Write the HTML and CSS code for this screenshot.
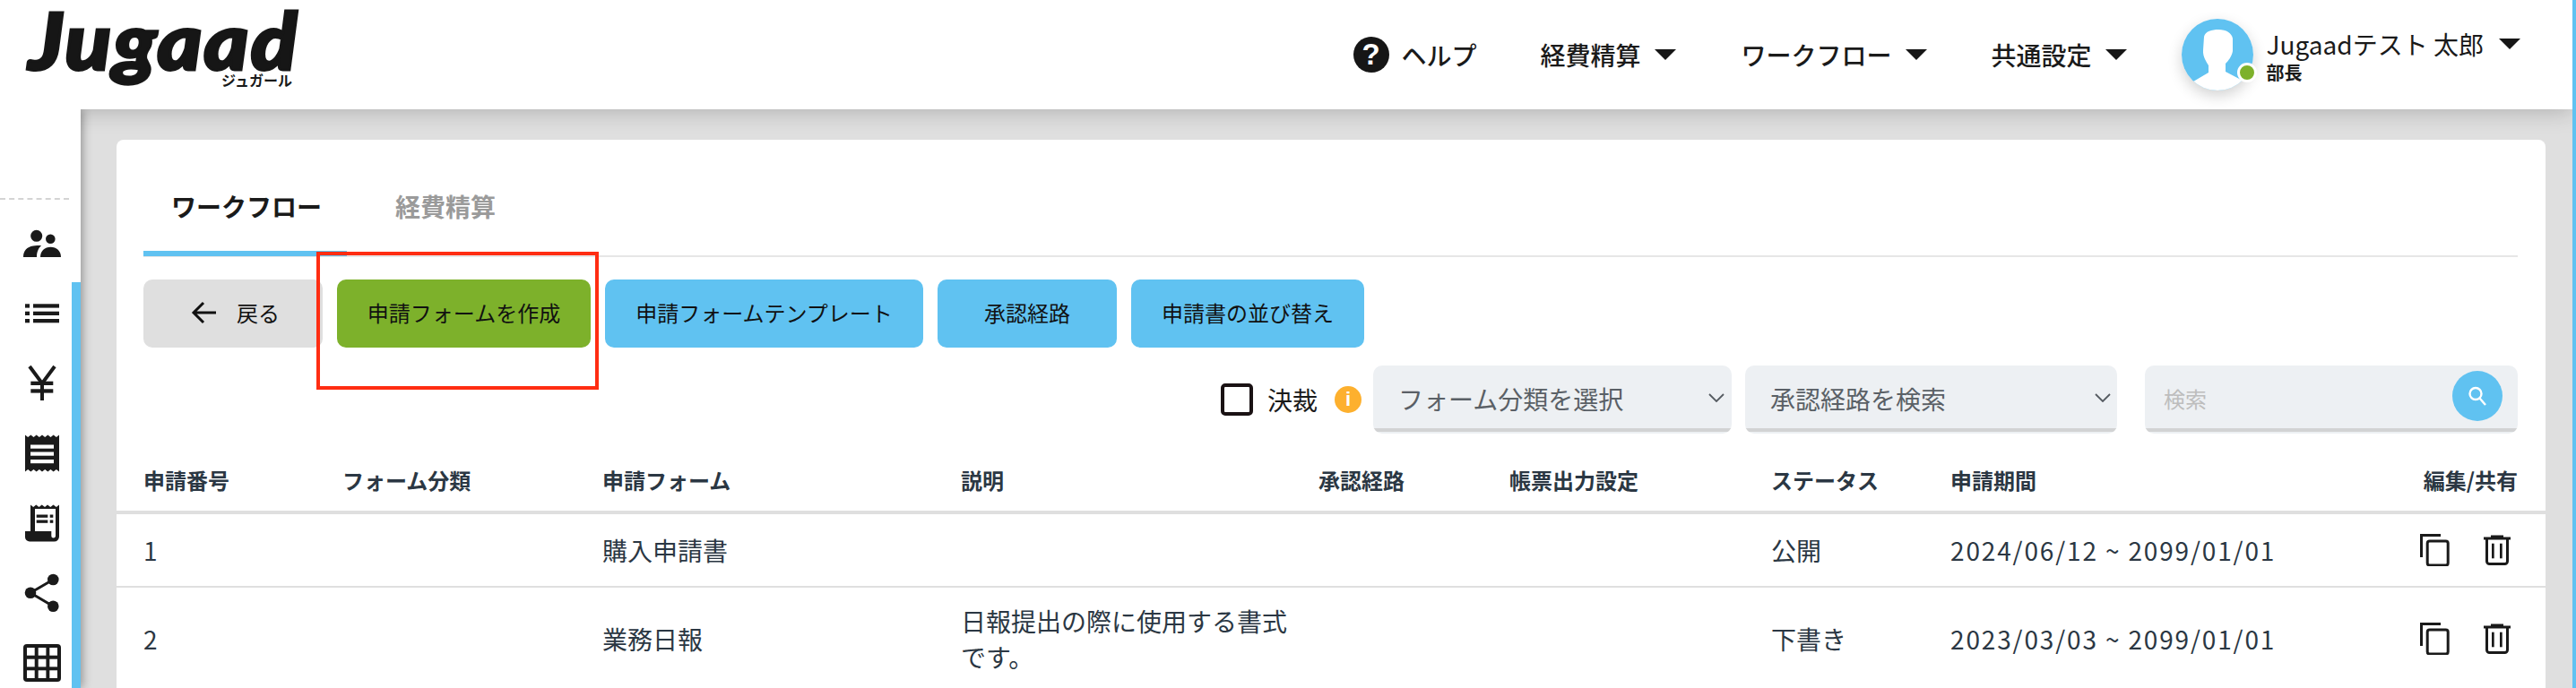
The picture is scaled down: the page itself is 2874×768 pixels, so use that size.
FILE: index.html
```html
<!DOCTYPE html>
<html lang="ja">
<head>
<meta charset="utf-8">
<title>Jugaad ワークフロー</title>
<link rel="stylesheet" href="styles.css">
</head>
<body>
<div class="app">
  <header class="header">
    <div class="logo">
      <span class="logo-word">Jugaad</span>
      <span class="logo-kana">ジュガール</span>
    </div>
    <nav class="nav">
      <a class="nav-help"><span class="help-icon">?</span><span>ヘルプ</span></a>
      <a class="nav-item"><span>経費精算</span><i class="caret"></i></a>
      <a class="nav-item nav-wf"><span>ワークフロー</span><i class="caret"></i></a>
      <a class="nav-item nav-common"><span>共通設定</span><i class="caret"></i></a>
    </nav>
    <div class="user">
      <div class="avatar">
        <svg viewBox="0 0 80 80" width="80" height="80">
          <defs><clipPath id="av"><circle cx="40" cy="40" r="40"/></clipPath></defs>
          <g clip-path="url(#av)">
            <rect width="80" height="80" fill="#60c2f1"/>
            <path fill="#fff" d="M13 70 L30 60 V52 C27 47 23.500 42 24 35 L25 20 C26 14 34 12 41 12 C50 12 56 16 57 22 L57 36 C56 42 52 47 49 50 V59 L70 70 V82 H10Z"/>
          </g>
        </svg>
        <span class="status-dot"></span>
      </div>
      <div class="user-text">
        <div class="user-name">Jugaadテスト 太郎</div>
        <div class="user-role">部長</div>
      </div>
      <i class="caret caret-user"></i>
    </div>
  </header>

  <div class="body-row">
    <aside class="sidebar">
      <div class="side-dash"></div>
      <div class="side-icons">
        <div class="side-item"><svg viewBox="0 0 44 44" class="side-svg"><circle cx="15.700" cy="13.300" r="6.500"/><circle cx="31.300" cy="16.700" r="5.300"/><path d="M1 37C1 30 5 25.500 12 24.500C15 24 18 24 21 24C18 27 16 31 16 37Z"/><path d="M20 37C20 30 25 25.700 31.500 25.700C38 25.700 43 30 43 37Z"/></svg></div>
        <div class="side-item"><svg viewBox="0 0 44 44" class="side-svg"><rect x="3" y="11.300" width="5" height="4.300"/><rect x="3" y="19.700" width="5" height="4.300"/><rect x="3" y="28" width="5" height="4.300"/><rect x="12" y="11.300" width="29" height="4.300"/><rect x="12" y="19.700" width="29" height="4.300"/><rect x="12" y="28" width="29" height="4.300"/></svg></div>
        <div class="side-item"><svg viewBox="0 0 44 44" class="side-svg"><path d="M8 3 L22 22 L36 3 M22 22 V41" fill="none" stroke="#1a1a1a" stroke-width="4"/><rect x="9.300" y="19.700" width="25" height="4.300"/><rect x="9.300" y="28.300" width="25" height="4.300"/></svg></div>
        <div class="side-item"><svg viewBox="0 0 44 44" class="side-svg"><path d="M3 1.500L6.170 4L9.330 1.500L12.500 4L15.670 1.500L18.830 4L22 1.500L25.170 4L28.330 1.500L31.500 4L34.670 1.500L37.830 4L41 1.500V42.500L37.830 40L34.670 42.500L31.500 40L28.330 42.500L25.170 40L22 42.500L18.830 40L15.670 42.500L12.500 40L9.330 42.500L6.170 40L3 42.500Z"/><rect x="9" y="12.500" width="26" height="4.200" fill="#fff"/><rect x="9" y="20.500" width="26" height="4.200" fill="#fff"/><rect x="9" y="29" width="26" height="4.200" fill="#fff"/></svg></div>
        <div class="side-item"><svg viewBox="0 0 44 44" class="side-svg"><path d="M9 1.500L12.200 4L15.300 1.500L18.500 4L21.700 1.500L25 4L28 1.500L31.300 4L34.500 1.500L37.800 4L41 1.500V37A5.500 5.500 0 0 1 35.500 42.500H8A5 5 0 0 1 3 37.500V31H9Z"/><path fill="#fff" d="M14 6H37V36.500A2.500 2.500 0 0 1 34.800 38.500A2.500 2.500 0 0 1 32.300 36V31H14Z"/><rect x="15.700" y="12.500" width="12.600" height="3.300"/><rect x="30.700" y="12.500" width="3.600" height="3.300"/><rect x="15.700" y="18.500" width="12.600" height="3.300"/><rect x="30.700" y="18.500" width="3.600" height="3.300"/></svg></div>
        <div class="side-item"><svg viewBox="0 0 44 44" class="side-svg"><path d="M34.300 7L9 21.700L34.300 36.700" fill="none" stroke="#1a1a1a" stroke-width="3"/><circle cx="34.300" cy="7" r="6.300"/><circle cx="9" cy="21.700" r="6.300"/><circle cx="34.300" cy="36.700" r="6.300"/></svg></div>
        <div class="side-item"><svg viewBox="0 0 44 44" class="side-svg"><rect x="1" y="1" width="42" height="42" rx="4"/><g fill="#fff"><rect x="5" y="5" width="8.700" height="8.700"/><rect x="17.700" y="5" width="8.700" height="8.700"/><rect x="30.300" y="5" width="8.700" height="8.700"/><rect x="5" y="17.700" width="8.700" height="8.700"/><rect x="17.700" y="17.700" width="8.700" height="8.700"/><rect x="30.300" y="17.700" width="8.700" height="8.700"/><rect x="5" y="30.300" width="8.700" height="8.700"/><rect x="17.700" y="30.300" width="8.700" height="8.700"/><rect x="30.300" y="30.300" width="8.700" height="8.700"/></g></svg></div>
      </div>
      <div class="side-strip"></div>
    </aside>

    <main class="content">
      <section class="card">
        <div class="tabs">
          <div class="tab tab-active">ワークフロー</div>
          <div class="tab">経費精算</div>
        </div>

        <div class="actions">
          <button class="btn btn-back">
            <svg viewBox="0 0 30 30" width="30" height="30"><path d="M28 15H4 M14 4L3 15L14 26" fill="none" stroke="#111" stroke-width="3"/></svg>
            <span>戻る</span>
          </button>
          <button class="btn btn-green">申請フォームを作成</button>
          <button class="btn btn-blue btn-template">申請フォームテンプレート</button>
          <button class="btn btn-blue btn-route">承認経路</button>
          <button class="btn btn-blue btn-sort">申請書の並び替え</button>
          <div class="highlight"></div>
        </div>

        <div class="filters">
          <span class="check"></span>
          <span class="check-label">決裁</span>
          <span class="info">i</span>
          <div class="field field-form">
            <span>フォーム分類を選択</span>
            <svg class="chev" viewBox="0 0 18 10" width="18" height="10"><path d="M1 1L9 9L17 1" fill="none" stroke="#555b61" stroke-width="1.800"/></svg>
          </div>
          <div class="field field-route">
            <span>承認経路を検索</span>
            <svg class="chev" viewBox="0 0 18 10" width="18" height="10"><path d="M1 1L9 9L17 1" fill="none" stroke="#555b61" stroke-width="1.800"/></svg>
          </div>
          <div class="field field-search">
            <span class="placeholder">検索</span>
            <span class="search-btn"><svg viewBox="0 0 24 24" width="24" height="24"><circle cx="10" cy="9.500" r="6.500" fill="none" stroke="#fff" stroke-width="2.400"/><path d="M14.500 14.500L21 22" stroke="#fff" stroke-width="2.400"/></svg></span>
          </div>
        </div>

        <table class="grid">
          <colgroup>
            <col class="c1"><col class="c2"><col class="c3"><col class="c4"><col class="c5"><col class="c6"><col class="c7"><col class="c8"><col class="c9">
          </colgroup>
          <thead>
            <tr>
              <th>申請番号</th><th>フォーム分類</th><th>申請フォーム</th><th>説明</th><th>承認経路</th><th>帳票出力設定</th><th>ステータス</th><th>申請期間</th><th class="right">編集/共有</th>
            </tr>
          </thead>
          <tbody>
            <tr>
              <td>1</td><td></td><td>購入申請書</td><td></td><td></td><td></td><td>公開</td><td class="date">2024/06/12 ~ 2099/01/01</td>
              <td class="right"><div class="row-icons">
                <svg viewBox="0 0 36 36" width="36" height="36"><path d="M3.500 26V1.500H25" fill="none" stroke="#1a1a1a" stroke-width="3"/><rect x="10.200" y="8" width="23" height="27" rx="2.500" fill="none" stroke="#1a1a1a" stroke-width="3"/></svg>
                <svg viewBox="0 0 36 36" width="36" height="36"><path d="M3 3.500H33V6.500H3Z M11 1.500H25V4H11Z" fill="#1a1a1a"/><path d="M6.500 5V30.500A3 3 0 0 0 9.500 33.500H26.500A3 3 0 0 0 29.500 30.500V5" fill="none" stroke="#1a1a1a" stroke-width="3"/><rect x="12" y="10.700" width="2.700" height="16.600" fill="#1a1a1a"/><rect x="21" y="10.700" width="2.700" height="16.600" fill="#1a1a1a"/></svg>
              </div></td>
            </tr>
            <tr>
              <td>2</td><td></td><td>業務日報</td><td>日報提出の際に使用する書式です。</td><td></td><td></td><td>下書き</td><td class="date">2023/03/03 ~ 2099/01/01</td>
              <td class="right"><div class="row-icons">
                <svg viewBox="0 0 36 36" width="36" height="36"><path d="M3.500 26V1.500H25" fill="none" stroke="#1a1a1a" stroke-width="3"/><rect x="10.200" y="8" width="23" height="27" rx="2.500" fill="none" stroke="#1a1a1a" stroke-width="3"/></svg>
                <svg viewBox="0 0 36 36" width="36" height="36"><path d="M3 3.500H33V6.500H3Z M11 1.500H25V4H11Z" fill="#1a1a1a"/><path d="M6.500 5V30.500A3 3 0 0 0 9.500 33.500H26.500A3 3 0 0 0 29.500 30.500V5" fill="none" stroke="#1a1a1a" stroke-width="3"/><rect x="12" y="10.700" width="2.700" height="16.600" fill="#1a1a1a"/><rect x="21" y="10.700" width="2.700" height="16.600" fill="#1a1a1a"/></svg>
              </div></td>
            </tr>
          </tbody>
        </table>
      </section>
    </main>
  </div>
</div>
</body>
</html>
```

FILE: styles.css
```css
* { box-sizing: border-box; }
html, body { margin: 0; height: 100%; overflow: hidden; }
body {
  font-family: "Noto Sans CJK JP", "Noto Sans", sans-serif;
  color: #1a1a1a;
  background: #dfdfdf;
}
.app {
  width: 2874px;
  height: 768px;
  border-right: 4px solid #60c2f1;
  display: flex;
  flex-direction: column;
  overflow: hidden;
}

/* header */
.header {
  height: 122px;
  flex: none;
  display: flex;
  align-items: center;
  background: #fff;
  padding: 0 58px 0 32px;
  position: relative;
  z-index: 2;
  box-shadow: 0 2px 24px rgba(0, 0, 0, .22);
}
.logo {
  width: 298px;
  display: flex;
  flex-direction: column;
  align-items: flex-end;
  margin-bottom: 11px;
}
.logo-word {
  width: 298px;
  font-family: "Lato", sans-serif;
  font-weight: 900;
  font-style: italic;
  font-size: 88px;
  line-height: 62px;
  letter-spacing: 2px;
  color: #161616;
  -webkit-text-stroke: 3px #161616;
  white-space: nowrap;
  transform: scaleX(1.08);
  transform-origin: left center;
}
.logo-kana {
  font-size: 16px;
  font-weight: 700;
  line-height: 18px;
  margin: 5px 4px 0 0;
}
.nav {
  margin-left: auto;
  display: flex;
  align-items: center;
  font-size: 28px;
  font-weight: 500;
  line-height: 40px;
}
.nav-help { display: flex; align-items: center; gap: 14px; margin-right: 71px; }
.help-icon {
  width: 40px;
  height: 40px;
  border-radius: 50%;
  background: #161616;
  color: #fff;
  font-family: "Liberation Sans", sans-serif;
  font-weight: 700;
  font-size: 33px;
  line-height: 40px;
  text-align: center;
}
.nav-item { display: flex; align-items: center; gap: 15px; }
.nav-wf { margin-left: 73px; }
.nav-common { margin-left: 72px; }
.caret {
  display: block;
  width: 0;
  height: 0;
  border-left: 12px solid transparent;
  border-right: 12px solid transparent;
  border-top: 12px solid #161616;
}
.user { display: flex; align-items: center; margin-left: 61px; }
.avatar {
  position: relative;
  width: 80px;
  height: 80px;
  border-radius: 50%;
  box-shadow: 0 6px 16px rgba(0, 0, 0, .18);
}
.avatar svg { display: block; }
.status-dot {
  position: absolute;
  right: -4px;
  bottom: 9px;
  width: 22px;
  height: 22px;
  border-radius: 50%;
  background: #7db12b;
  border: 3.500px solid #fff;
}
.user-text { margin-left: 15px; }
.user-name { font-size: 28px; line-height: 40px; white-space: nowrap; }
.user-role { font-size: 20px; font-weight: 700; line-height: 24px; }
.caret-user { margin: -24px 0 0 17px; }

/* layout */
.body-row { flex: 1; display: flex; min-height: 0; }
.sidebar {
  width: 90px;
  flex: none;
  background: #fff;
  position: relative;
  z-index: 3;
  box-shadow: 2px 0 10px rgba(0, 0, 0, .35);
  clip-path: inset(0 -24px -24px 0);
}
.side-dash {
  width: 77px;
  margin-top: 99px;
  border-top: 2px dashed #d4d4d4;
}
.side-icons { margin-top: 10px; width: 94px; }
.side-item { height: 78px; display: flex; align-items: center; justify-content: center; }
.side-svg { width: 44px; height: 44px; fill: #1a1a1a; display: block; }
.side-strip {
  position: absolute;
  left: 80px;
  top: 193px;
  bottom: 0;
  width: 10px;
  background: #60c2f1;
}
.content { flex: 1; min-width: 0; padding: 34px 30px 0 40px; }

/* card */
.card { background: #fff; border-radius: 8px 8px 0 0; height: 100%; }
.tabs {
  display: flex;
  gap: 23px;
  margin: 0 31px 0 30px;
  border-bottom: 2px solid #e6e6e6;
  font-size: 28px;
  font-weight: 700;
  line-height: 40px;
}
.tab {
  padding: 54px 28px 30px 31px;
  color: #9a9a9a;
  border-bottom: 6px solid transparent;
  margin-bottom: -1px;
}
.tab-active { color: #1a1a1a; border-bottom-color: #60c2f1; }

.actions {
  position: relative;
  display: flex;
  gap: 16px;
  margin: 25px 31px 0 30px;
}
.btn {
  height: 76px;
  min-width: 200px;
  padding: 0 0 2px;
  border: 0;
  border-radius: 10px;
  font: inherit;
  font-size: 24px;
  line-height: 36px;
  color: #111;
  display: flex;
  align-items: center;
  justify-content: center;
}
.btn-back { background: #dfdfdf; gap: 21px; justify-content: flex-start; padding-left: 53px; }
.btn-back svg { display: block; }
.btn-green { background: #7db12b; width: 283px; }
.btn-blue { background: #60c2f1; }
.btn-template { width: 355px; }
.btn-route { width: 200px; }
.btn-sort { width: 260px; }
.highlight {
  position: absolute;
  left: 193px;
  top: -31px;
  width: 315px;
  height: 154px;
  border: 4px solid #ff2d12;
  pointer-events: none;
}

.filters {
  display: flex;
  align-items: center;
  justify-content: flex-end;
  margin: 20px 31px 0 30px;
}
.check {
  width: 36px;
  height: 36px;
  border: 4px solid #1a1214;
  border-radius: 5px;
}
.check-label { font-size: 28px; line-height: 40px; margin-left: 16px; }
.info {
  width: 30px;
  height: 30px;
  margin: 0 13px 0 19px;
  border-radius: 50%;
  background: #fdb02e;
  color: #fff;
  font-family: "Liberation Sans", sans-serif;
  font-weight: 700;
  font-size: 22px;
  line-height: 30px;
  text-align: center;
}
.field {
  height: 76px;
  padding-bottom: 2px;
  border-radius: 10px;
  background: linear-gradient(to top, #edf0f3 2px, #d2d3d4 2px, #d2d3d4 6px, #edf0f3 6px);
  display: flex;
  align-items: center;
  justify-content: space-between;
  font-size: 28px;
  line-height: 40px;
  color: #5a6066;
}
.field-form { width: 400px; padding-left: 28px; padding-right: 8px; }
.field-route { width: 415px; margin-left: 15px; padding-left: 28px; padding-right: 7px; }
.field-search { width: 416px; margin-left: 31px; padding-left: 21px; padding-right: 17px; }
.chev { margin-top: -2px; }
.placeholder { font-size: 24px; color: #bdbdbd; }
.search-btn {
  width: 56px;
  height: 56px;
  margin-top: -6px;
  border-radius: 50%;
  background: #60c2f1;
  display: flex;
  align-items: center;
  justify-content: center;
}

/* table */
.grid {
  width: 100%;
  table-layout: fixed;
  border-collapse: separate;
  border-spacing: 0;
  margin-top: 20px;
  color: #2b3743;
}
.c1 { width: 252px; }
.c2 { width: 290px; }
.c3 { width: 400px; }
.c4 { width: 399px; }
.c5 { width: 213px; }
.c6 { width: 292px; }
.c7 { width: 200px; }
.c8 { width: 500px; }
th {
  height: 70px;
  padding: 0 0 2px;
  text-align: left;
  font-size: 24px;
  font-weight: 700;
  line-height: 36px;
  border-bottom: 4px solid #dfdfdf;
}
td {
  height: 82px;
  padding: 17px 30px 17px 0;
  font-size: 28px;
  line-height: 40px;
  border-bottom: 2px solid #dfdfdf;
}
th:first-child, td:first-child { padding-left: 30px; }
.grid .right { text-align: right; padding-right: 31px; }
.date { white-space: nowrap; padding-right: 0; letter-spacing: 1.850px; }
.row-icons { display: flex; justify-content: flex-end; column-gap: 34px; margin-right: 5px; }
.row-icons svg { display: block; }
```
